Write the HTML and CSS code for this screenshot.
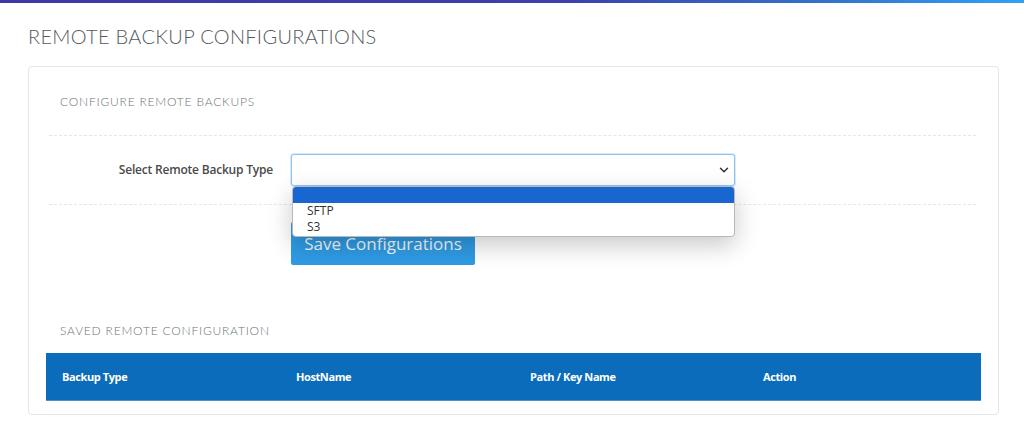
FILE: index.html
```html
<!DOCTYPE html>
<html>
<head>
<meta charset="utf-8">
<link rel="stylesheet" href="styles.css">
</head>
<body>
<div class="topbar"></div>
<main class="page">
  <h1 class="page-title">REMOTE BACKUP CONFIGURATIONS</h1>
  <section class="card">
    <h2 class="section-title">CONFIGURE REMOTE BACKUPS</h2>
    <div class="form-row">
      <label class="form-label">Select Remote Backup Type</label>
      <div class="select-wrap">
        <div class="select">
          <svg class="chevron" width="10" height="6" viewBox="0 0 10 6"><path d="M1.5 1.2l3.5 3.5 3.5-3.5" fill="none" stroke="#333" stroke-width="1.5" stroke-linecap="round" stroke-linejoin="round"/></svg>
        </div>
        <ul class="dropdown">
          <li class="opt opt-active">&nbsp;</li>
          <li class="opt">SFTP</li>
          <li class="opt">S3</li>
        </ul>
      </div>
    </div>
    <div class="actions">
      <button class="btn-save">Save Configurations</button>
    </div>
    <h2 class="section-title saved-title">SAVED REMOTE CONFIGURATION</h2>
    <div class="table-head">
      <div class="th">Backup Type</div>
      <div class="th">HostName</div>
      <div class="th">Path / Key Name</div>
      <div class="th">Action</div>
    </div>
  </section>
</main>
</body>
</html>
```

FILE: styles.css
```css
* { box-sizing: border-box; }
html, body { margin: 0; padding: 0; background: #fff; }
body { font-family: "Open Sans", "Liberation Sans", sans-serif; color: #333; }

.topbar {
  height: 3px;
  background: linear-gradient(90deg, #3f37a6 0%, #3d40ad 55%, #3470cc 80%, #2ea3f0 100%);
}

.page { padding: 0 25px 0 28px; }

.page-title {
  margin: 0;
  padding: 21px 0 0 0;
  height: 63px;
  font-family: "Lato", sans-serif;
  font-weight: 300;
  font-size: 20px;
  letter-spacing: 0.3px;
  color: #555a60;
  line-height: 24px;
}

.card {
  width: 971px;
  height: 349px;
  border: 1px solid #e4e6e8;
  border-radius: 4px;
  padding: 0 17px;
}

.section-title {
  margin: 0;
  font-family: "Lato", sans-serif;
  font-weight: 300;
  font-size: 12px;
  letter-spacing: 0.8px;
  color: #6e7378;
  line-height: 16px;
  padding: 27px 0 0 14px;
  height: 68px;
}

.form-row {
  margin: 0 5px 0 3px;
  border-top: 1px dashed #e6e6e6;
  border-bottom: 1px dashed #e6e6e6;
  height: 70px;
  display: grid;
  grid-template-columns: 242px 444px;
  align-items: start;
  padding-top: 18px;
}

.form-label {
  justify-self: end;
  padding-right: 18px;
  font-weight: 600;
  font-size: 12px;
  letter-spacing: -0.2px;
  color: #4a4a4a;
  line-height: 32px;
}

.select-wrap { position: relative; }

.select {
  height: 32px;
  border: 1px solid #8ec4f2;
  border-radius: 3px;
  box-shadow: 0 0 0 1px rgba(142,196,242,0.35);
  background: #fff;
  display: flex;
  align-items: center;
  justify-content: flex-end;
  padding-right: 5px;
}

.dropdown {
  position: absolute;
  left: 1px;
  top: 32px;
  width: 443px;
  margin: 0;
  padding: 0 0 1px 0;
  list-style: none;
  background: #fff;
  border: 1px solid #b9b9b9;
  border-radius: 4px;
  box-shadow: 0 8px 24px rgba(0,0,0,0.22);
  overflow: hidden;
  z-index: 5;
}

.opt {
  height: 16px;
  line-height: 16px;
  font-size: 12px;
  color: #333;
  padding-left: 14px;
}
.opt-active { background: #1a66d1; height: 16px; }

.actions {
  padding: 17px 0 0 245px;
  height: 118px;
}

.btn-save {
  width: 184px;
  height: 43px;
  border: none;
  border-radius: 2px;
  background: #2f9be4;
  color: #f2f8fd;
  font-family: "Open Sans", sans-serif;
  font-size: 17px;
  padding: 0;
}

.saved-title { height: 30px; padding-top: 0; }

.table-head {
  display: grid;
  grid-template-columns: 234px 234px 233px 234px;
  background: #0c6cbc;
  height: 48px;
  align-items: center;
  border-bottom: 1px solid #4a93d0;
}

.th {
  padding-left: 16px;
  color: #fff;
  font-weight: 700;
  font-size: 11px;
  letter-spacing: -0.4px;
}
```
